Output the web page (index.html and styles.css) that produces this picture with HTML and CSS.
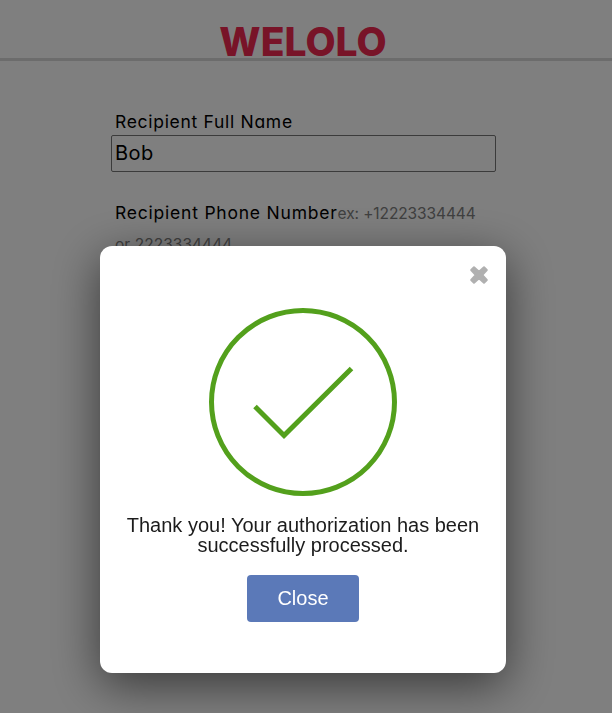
FILE: index.html
```html
<!DOCTYPE html>
<html lang="en">
<head>
<meta charset="utf-8">
<title>Welolo</title>
<link rel="stylesheet" href="styles.css">
</head>
<body>
<header class="header"><div class="logo">WELOLO</div></header>
<main class="form">
  <label class="label" for="name"><span class="label-name">Recipient Full Name</span></label>
  <input class="field" id="name" type="text" value="Bob">
  <div class="label phone"><span class="label-phone">Recipient Phone Number</span><span class="hint">ex: +12223334444</span><br><span class="hint hint-end">or 2223334444</span></div>
</main>
<div class="overlay">
  <section class="modal" role="dialog">
    <button class="dismiss" aria-label="Dismiss">
      <svg width="20" height="20" viewBox="0 0 20 20"><path d="M5 2.200 10 6.800 15 2.200 17.800 5 13.200 10 17.800 15 15 17.800 10 13.200 5 17.800 2.200 15 6.800 10 2.200 5Z" fill="#b0b0b0" stroke="#b0b0b0" stroke-width="2" stroke-linejoin="round"/></svg>
    </button>
    <svg class="check" width="188" height="188" viewBox="0 0 188 188" fill="none" stroke="#53a01c" stroke-width="5"><circle cx="94" cy="94" r="91.5"/><path d="M46 98.5 75 127.5 142.500 60.500"/></svg>
    <p class="message"><span>Thank you! Your authorization has been</span><br><span>successfully processed.</span></p>
    <button class="close">Close</button>
  </section>
</div>
</body>
</html>
```
FILE: styles.css
```css
* { box-sizing: border-box; }
body {
  margin: 0;
  height: 713px;
  overflow: hidden;
  background: #fff;
  color: #000;
  font-family: Inter, sans-serif;
  font-feature-settings: "cv11";
}
.header {
  height: 61px;
  border-bottom: 3px solid #d8d8d8;
  text-align: center;
}
.logo {
  padding: 18px 6px 0 0;
  font-size: 39px;
  line-height: 47px;
  font-weight: 800;
  letter-spacing: 0;
  color: #f02850;
}
.form { width: 386px; margin: 46px 0 0 111px; }
.label {
  display: block;
  height: 28px;
  padding-left: 4px;
  font-size: 17.500px;
  line-height: 30px;
  white-space: nowrap;
}
.label-name { letter-spacing: .7px; }
.label-phone { letter-spacing: .78px; }
.field {
  display: block;
  width: 385px;
  height: 37px;
  padding: 0 4px 2px 3px;
  border: 1px solid #767676;
  border-radius: 2px;
  background: #fff;
  font: 20px/30px Inter, sans-serif;
  letter-spacing: .5px;
}
.phone { margin-top: 26px; height: 60px; }
.hint { font-size: 15.500px; letter-spacing: -.1px; color: #808080; }
.hint-end { letter-spacing: .05px; }
.overlay {
  position: fixed;
  inset: 0;
  padding: 246px 0 0 100px;
  background: rgba(0, 0, 0, .5);
}
.modal {
  position: relative;
  display: flex;
  flex-direction: column;
  align-items: center;
  width: 406px;
  height: 427px;
  padding-top: 62px;
  border-radius: 12px;
  background: #fff;
  box-shadow: 0 12px 48px rgba(0, 0, 0, .56);
  font-family: "Liberation Sans", Arial, sans-serif;
}
.dismiss {
  position: absolute;
  top: 19px;
  right: 17px;
  padding: 0;
  border: 0;
  background: none;
  line-height: 0;
}
.message {
  margin: 19px 0 0;
  font-size: 20px;
  line-height: 20px;
  text-align: center;
  color: #1c1c1c;
  white-space: nowrap;
}
.close {
  width: 112px;
  height: 47px;
  margin-top: 20px;
  padding: 0 0 2px;
  border: 0;
  border-radius: 4px;
  background: #5b79b8;
  color: #fff;
  font: 20px/24px "Liberation Sans", Arial, sans-serif;
}
```
